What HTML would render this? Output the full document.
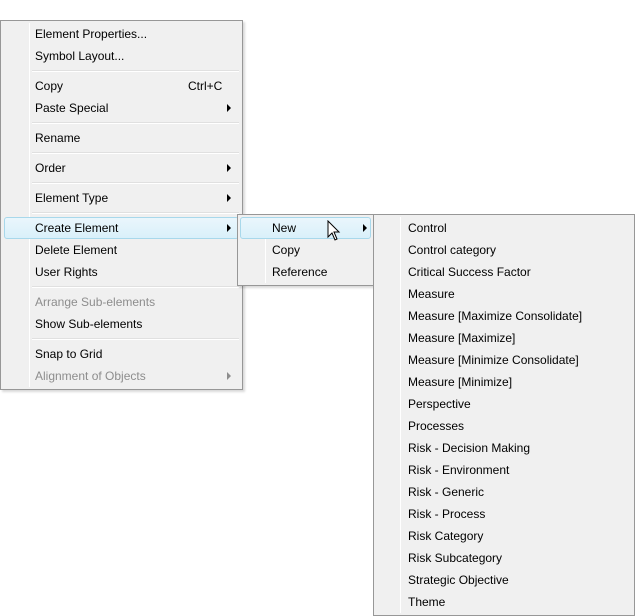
<!DOCTYPE html>
<html><head><style>
*{margin:0;padding:0;box-sizing:border-box}
body{width:635px;height:616px;background:#fff;position:relative;overflow:hidden;font-family:"Liberation Sans",sans-serif;font-size:12px;color:#000}
.m{position:absolute;background:#f0f0f0;border:1px solid #979797;box-shadow:2px 2px 2px rgba(0,0,0,0.15)}
.g{position:absolute;top:2px;bottom:2px;width:1px;background:#e2e3e3;border-right:1px solid #fff}
.i{position:absolute;height:22px;line-height:22px;white-space:nowrap}
.d{color:#8d8d8d}
.s{position:absolute;height:2px;border-top:1px solid #e0e0e0;border-bottom:1px solid #fff}
.h{position:absolute;height:22px;border:1px solid #a8d8eb;border-radius:3px;background:linear-gradient(#eaf6fc,#d9f0fa)}
.a{position:absolute;width:0;height:0;border-top:4px solid transparent;border-bottom:4px solid transparent;border-left:4px solid #000}
</style></head><body>
<div class="m" style="left:0;top:20px;width:243px;height:370px">
<div class="g" style="left:28px"></div>
<div class="h" style="left:3px;top:196px;width:235px"></div>
<div class="i" style="left:34px;top:2px">Element Properties...</div>
<div class="i" style="left:34px;top:24px">Symbol Layout...</div>
<div class="s" style="left:31px;right:3px;top:49px"></div>
<div class="i" style="left:34px;top:54px">Copy</div>
<div class="i" style="left:187px;top:54px">Ctrl+C</div>
<div class="i" style="left:34px;top:76px">Paste Special</div><div class="a" style="left:226px;top:83px"></div>
<div class="s" style="left:31px;right:3px;top:101px"></div>
<div class="i" style="left:34px;top:106px">Rename</div>
<div class="s" style="left:31px;right:3px;top:131px"></div>
<div class="i" style="left:34px;top:136px">Order</div><div class="a" style="left:226px;top:143px"></div>
<div class="s" style="left:31px;right:3px;top:161px"></div>
<div class="i" style="left:34px;top:166px">Element Type</div><div class="a" style="left:226px;top:173px"></div>
<div class="s" style="left:31px;right:3px;top:191px"></div>
<div class="i" style="left:34px;top:196px">Create Element</div><div class="a" style="left:226px;top:203px"></div>
<div class="i" style="left:34px;top:218px">Delete Element</div>
<div class="i" style="left:34px;top:240px">User Rights</div>
<div class="s" style="left:31px;right:3px;top:265px"></div>
<div class="i d" style="left:34px;top:270px">Arrange Sub-elements</div>
<div class="i" style="left:34px;top:292px">Show Sub-elements</div>
<div class="s" style="left:31px;right:3px;top:317px"></div>
<div class="i" style="left:34px;top:322px">Snap to Grid</div>
<div class="i d" style="left:34px;top:344px">Alignment of Objects</div><div class="a" style="left:226px;top:351px;border-left-color:#8d8d8d"></div>
</div>
<div class="m" style="left:237px;top:214px;width:137px;height:72px">
<div class="g" style="left:27px"></div>
<div class="h" style="left:2px;top:2px;width:131px"></div>
<div class="i" style="left:34px;top:2px">New</div><div class="a" style="left:125px;top:9px"></div>
<div class="i" style="left:34px;top:24px">Copy</div>
<div class="i" style="left:34px;top:46px">Reference</div>
<svg style="position:absolute;left:89px;top:5px" width="14" height="22" viewBox="0 0 14 22"><path d="M1 1 L1 17 L5 13 L8 20 L10 19 L7 12 L12 12 Z" fill="#fff" stroke="#000" stroke-width="1"/></svg>
</div>
<div class="m" style="left:373px;top:214px;width:262px;height:402px">
<div class="g" style="left:26px"></div>
<div class="i" style="left:34px;top:2px">Control</div>
<div class="i" style="left:34px;top:24px">Control category</div>
<div class="i" style="left:34px;top:46px">Critical Success Factor</div>
<div class="i" style="left:34px;top:68px">Measure</div>
<div class="i" style="left:34px;top:90px">Measure [Maximize Consolidate]</div>
<div class="i" style="left:34px;top:112px">Measure [Maximize]</div>
<div class="i" style="left:34px;top:134px">Measure [Minimize Consolidate]</div>
<div class="i" style="left:34px;top:156px">Measure [Minimize]</div>
<div class="i" style="left:34px;top:178px">Perspective</div>
<div class="i" style="left:34px;top:200px">Processes</div>
<div class="i" style="left:34px;top:222px">Risk - Decision Making</div>
<div class="i" style="left:34px;top:244px">Risk - Environment</div>
<div class="i" style="left:34px;top:266px">Risk - Generic</div>
<div class="i" style="left:34px;top:288px">Risk - Process</div>
<div class="i" style="left:34px;top:310px">Risk Category</div>
<div class="i" style="left:34px;top:332px">Risk Subcategory</div>
<div class="i" style="left:34px;top:354px">Strategic Objective</div>
<div class="i" style="left:34px;top:376px">Theme</div>
</div>
</body></html>
